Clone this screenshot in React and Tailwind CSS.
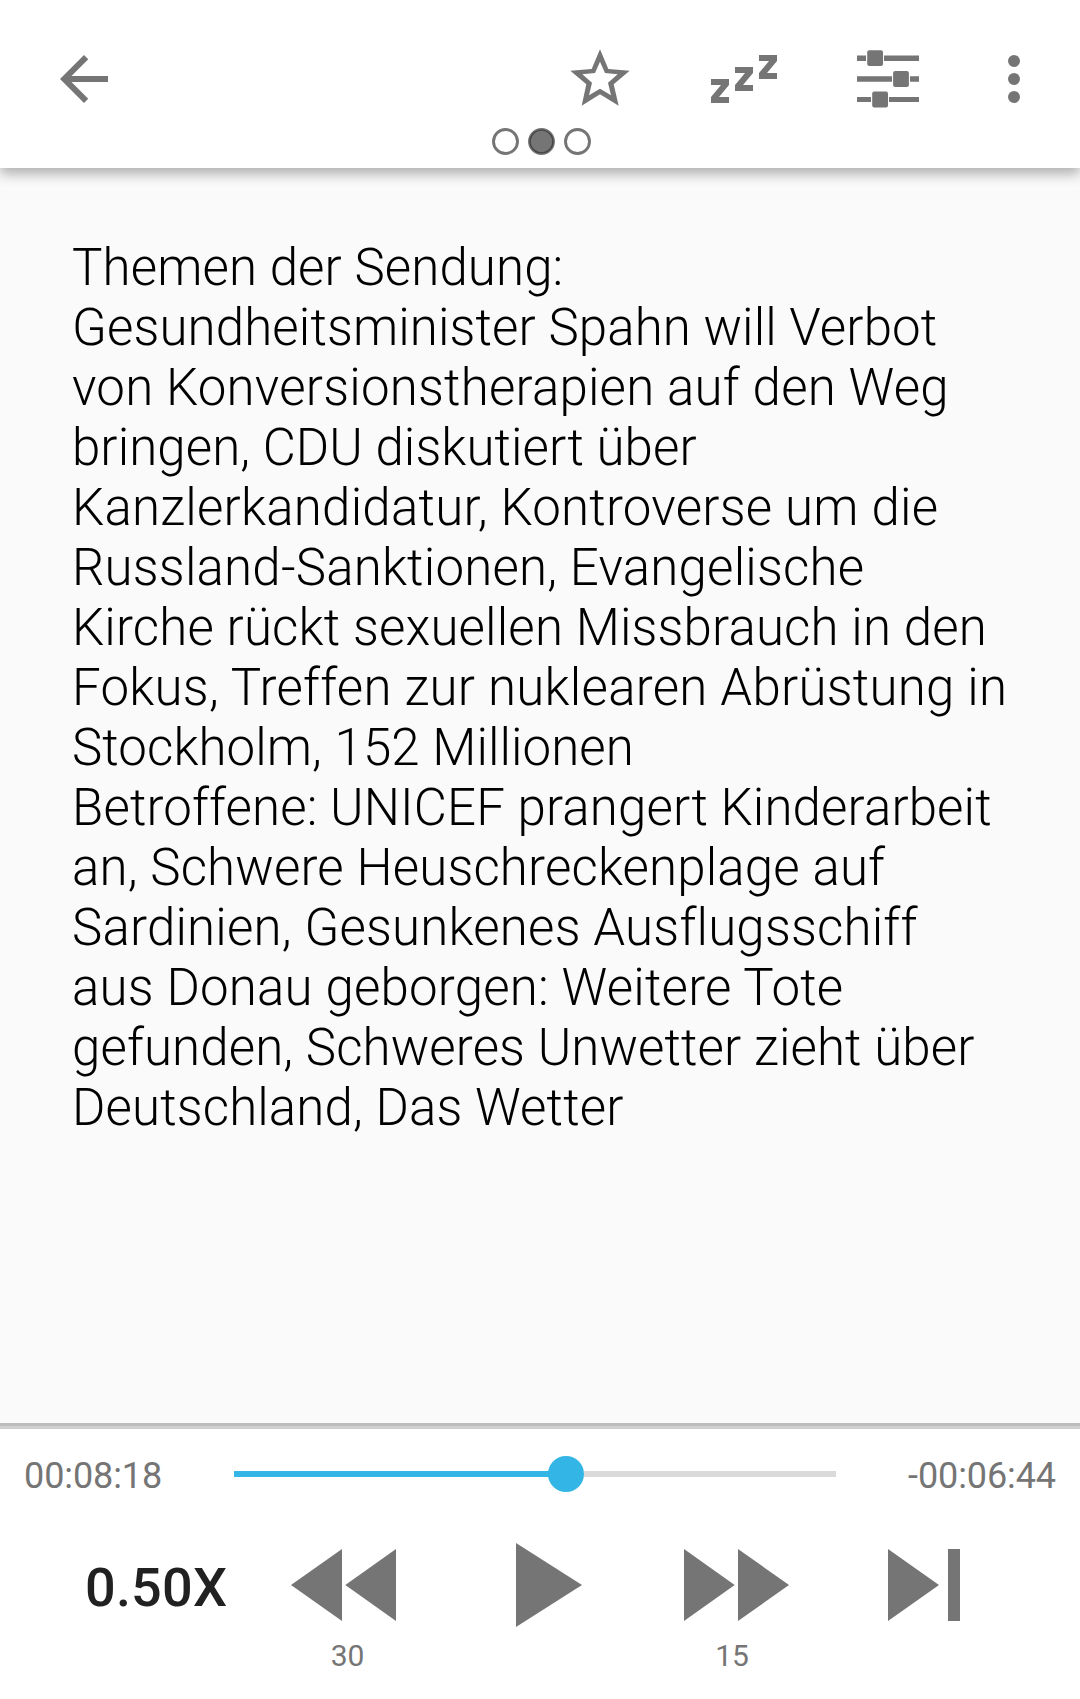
const LINES = [
  { text: "Themen der Sendung:", tracking: "tracking-[0.11px]" },
  { text: "Gesundheitsminister Spahn will Verbot", tracking: "tracking-[0.12px]" },
  { text: "von Konversionstherapien auf den Weg", tracking: "tracking-[0.21px]" },
  { text: "bringen, CDU diskutiert über", tracking: "tracking-[0.08px]" },
  { text: "Kanzlerkandidatur, Kontroverse um die", tracking: "tracking-[0.23px]" },
  { text: "Russland-Sanktionen, Evangelische", tracking: "tracking-[0.2px]" },
  { text: "Kirche rückt sexuellen Missbrauch in den", tracking: "tracking-[0.16px]" },
  { text: "Fokus, Treffen zur nuklearen Abrüstung in", tracking: "tracking-[0.26px]" },
  { text: "Stockholm, 152 Millionen", tracking: "tracking-[0.09px]" },
  { text: "Betroffene: UNICEF prangert Kinderarbeit", tracking: "tracking-[0.13px]" },
  { text: "an, Schwere Heuschreckenplage auf", tracking: "tracking-[0.16px]" },
  { text: "Sardinien, Gesunkenes Ausflugsschiff", tracking: "tracking-[0.2px]" },
  { text: "aus Donau geborgen: Weitere Tote", tracking: "tracking-[0.2px]" },
  { text: "gefunden, Schweres Unwetter zieht über", tracking: "tracking-[0.12px]" },
  { text: "Deutschland, Das Wetter", tracking: "tracking-[0.13px]" },
];

function BackIcon() {
  return (
    <svg className="size-[72px]" viewBox="0 0 24 24" fill="currentColor">
      <path d="M20 11H7.83l5.59-5.59L12 4l-8 8 8 8 1.41-1.41L7.83 13H20v-2z" />
    </svg>
  );
}

function StarIcon() {
  return (
    <svg className="h-[57px] w-[60px]" viewBox="0 0 180 171" fill="currentColor" fillRule="evenodd">
      <path d="M90 1L115 60 179 65 131 106 146 170 90 136 35 170 49 106 1 65 65 60ZM90 38L75 72 37 76 66 101 57 139 90 119 123 139 114 101 143 76 105 72Z" />
    </svg>
  );
}

function SleepIcon() {
  return (
    <svg className="h-12 w-[66px]" viewBox="0 0 66 48" fill="currentColor">
      <path d="M0 24H18V30L8 42H18V48H0V42L10 30H0Z" />
      <path d="M24 12H42V18L32 30H42V36H24V30L34 18H24Z" />
      <path d="M48 0H66V6L56 18H66V24H48V18L58 6H48Z" />
    </svg>
  );
}

function TuneIcon() {
  return (
    <svg className="h-[58px] w-[62px]" viewBox="0 0 62 58" fill="currentColor">
      <path d="M0 5.5H9V11H0ZM27 5.5H62V11H27ZM0 26.2H35V31.7H0ZM53 26.2H62V31.7H53ZM0 47H14V52H0ZM32 47H62V52H32Z" />
      <rect x="10.2" y="0.2" width="15.8" height="15.8" rx="2" />
      <rect x="36.1" y="21.1" width="15.8" height="15.8" rx="2" />
      <rect x="15.2" y="41.6" width="15.8" height="15.8" rx="2" />
    </svg>
  );
}

function MoreIcon() {
  return (
    <svg className="h-12 w-3" viewBox="0 0 12 48" fill="currentColor">
      <circle cx="6" cy="6" r="6" />
      <circle cx="6" cy="24" r="6" />
      <circle cx="6" cy="42" r="6" />
    </svg>
  );
}

function PageDots() {
  return (
    <svg className="h-7 w-[100px]" viewBox="0 0 100 28" fill="none" stroke="#757575" strokeWidth="2.9">
      <circle cx="14.5" cy="14.5" r="12" />
      <circle cx="50.5" cy="14.5" r="12" fill="#757575" />
      <circle cx="50.5" cy="14.5" r="11.4" stroke="#444" strokeWidth="1.4" />
      <circle cx="86.5" cy="14.5" r="12" />
    </svg>
  );
}

function Header() {
  return (
    <header className="relative z-10 h-[168px] bg-white pt-[43px] text-[#757575] shadow-[0_6px_12px_rgba(0,0,0,0.3)]">
      <div className="flex h-[72px] items-center pl-12">
        <button><BackIcon /></button>
        <button className="ml-[450px] pb-1"><StarIcon /></button>
        <button className="ml-[81px]"><SleepIcon /></button>
        <button className="ml-[80px]"><TuneIcon /></button>
        <button className="ml-[89px]"><MoreIcon /></button>
      </div>
      <div className="mt-3 flex justify-center pl-[2px]">
        <PageDots />
      </div>
    </header>
  );
}

function SeekBar() {
  return (
    <div className="flex h-[90px] items-center justify-between px-6 text-[36px] leading-[42px]">
      <span className="pt-1 tracking-[-0.1px]">00:08:18</span>
      <div className="flex w-[602px] items-center">
        <div className="h-[6px] w-[315px] bg-[#33b5e5]" />
        <div className="-ml-px size-9 shrink-0 rounded-full bg-[#33b5e5]" />
        <div className="h-[6px] flex-1 bg-[#dadada]" />
      </div>
      <span className="pt-1 tracking-[-0.1px]">-00:06:44</span>
    </div>
  );
}

function Controls() {
  return (
    <div className="flex items-start text-[30px] leading-9">
      <div className="mt-[37px] ml-[85px] w-[206px] text-[54px] leading-[63px] font-medium tracking-[0.2px] text-[#212121]">0.50X</div>
      <div className="mt-[30px] flex w-[105px] flex-col items-center">
        <svg className="h-[72px] w-[105px]" viewBox="0 0 105 72" fill="currentColor">
          <path d="M51 0V72L0 36ZM105 0V72L54.3 36Z" />
        </svg>
        <span className="mt-[17px] ml-2">30</span>
      </div>
      <svg className="mt-6 ml-[120px] h-[84px] w-[66px]" viewBox="0 0 66 84" fill="currentColor">
        <path d="M0 0L66 42 0 84Z" />
      </svg>
      <div className="mt-[30px] ml-[102px] flex w-[105px] flex-col items-center">
        <svg className="h-[72px] w-[105px]" viewBox="0 0 105 72" fill="currentColor">
          <path d="M0 0L50.7 36 0 72ZM54 0L105 36 54 72Z" />
        </svg>
        <span className="mt-[17px] mr-[9px]">15</span>
      </div>
      <svg className="mt-[30px] ml-[99px] h-[72px] w-[72px]" viewBox="0 0 72 72" fill="currentColor">
        <path d="M0 0L51 36 0 72ZM60 0H72V72H60Z" />
      </svg>
    </div>
  );
}

export default function App() {
  return (
    <div className="flex h-[1699px] w-[1080px] flex-col overflow-hidden bg-[#fafafa] font-['Roboto',sans-serif]">
      <Header />
      <main className="flex-1 pt-[70px] pl-[72px] text-[51px] leading-[60px] font-light text-black">
        {LINES.map(({ text, tracking }) => (
          <p key={text} className={`whitespace-nowrap ${tracking}`}>{text}</p>
        ))}
      </main>
      <div className="h-[3px] bg-[#bdbdbd]" />
      <div className="h-[3px] bg-[#d0d0d0]" />
      <footer className="h-[270px] bg-white text-[#757575]">
        <SeekBar />
        <Controls />
      </footer>
    </div>
  );
}
